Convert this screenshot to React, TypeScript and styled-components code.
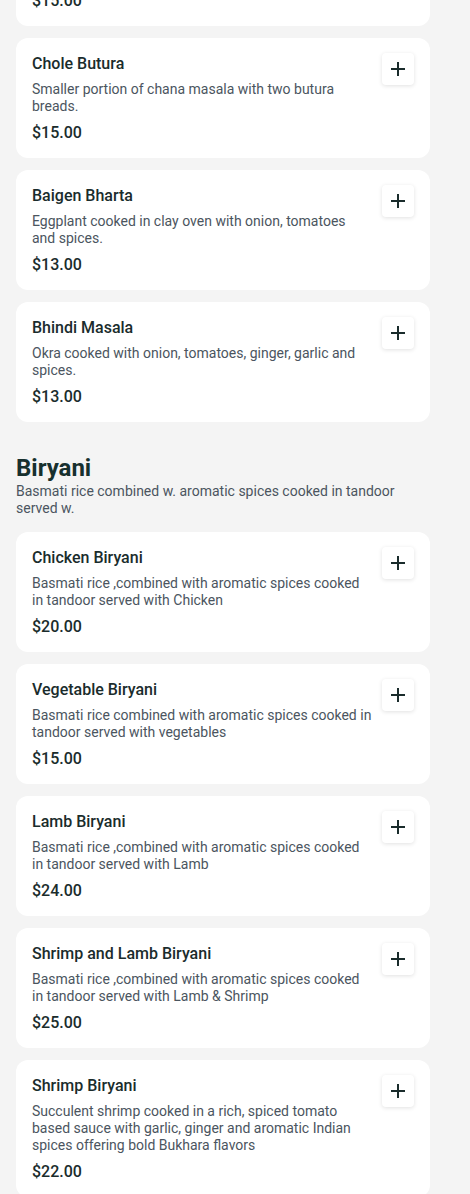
import React from "react";
import styled, { createGlobalStyle } from "styled-components";

const GlobalStyle = createGlobalStyle`
  html, body {
    margin: 0;
    padding: 0;
    background: #f4f4f4;
    font-family: Roboto, "Noto Sans", Arial, sans-serif;
    -webkit-font-smoothing: antialiased;
  }

  * {
    box-sizing: border-box;
  }
`;

const Page = styled.div`
  width: 430px;
  padding: 0 0 0 16px;
  margin-top: -94px;
`;

const Section = styled.section`
  display: flex;
  flex-direction: column;
  gap: 12px;

  & + & {
    margin-top: 32px;
  }
`;

const SectionHeader = styled.header`
  margin-bottom: 3px;
`;

const SectionTitle = styled.h2`
  margin: 0;
  font-size: 24px;
  line-height: 29px;
  font-weight: 700;
  color: #17302e;
`;

const SectionText = styled.p`
  margin: 0;
  font-size: 14px;
  line-height: 17px;
  color: #4b5560;
`;

const Card = styled.div`
  display: flex;
  align-items: flex-start;
  gap: 10px;
  background: #ffffff;
  border-radius: 12px;
  padding: 16px 16px 15px;
`;

const Info = styled.div`
  flex: 1;
  min-width: 0;
`;

const Name = styled.h3`
  margin: 0 0 7px;
  font-size: 16px;
  line-height: 20px;
  font-weight: 500;
  color: #1a2c2c;
`;

const Description = styled.p`
  margin: 0 0 8px;
  font-size: 14px;
  line-height: 17px;
  color: #4b5560;
`;

const Price = styled.div`
  font-size: 16px;
  line-height: 20px;
  font-weight: 500;
  color: #1a2c2c;
`;

const AddButton = styled.button`
  flex: none;
  width: 32px;
  height: 32px;
  margin-top: -1px;
  display: flex;
  align-items: center;
  justify-content: center;
  padding: 0;
  border: none;
  border-radius: 4px;
  background: #ffffff;
  box-shadow: 0 1px 4px rgba(0, 0, 0, 0.12);
  color: #1a2c2c;
  cursor: pointer;
`;

const PlusIcon = () => (
  <svg width="16" height="16" viewBox="0 0 16 16" fill="none">
    <path d="M8 1v14M1 8h14" stroke="currentColor" strokeWidth="2" />
  </svg>
);

interface Dish {
  name: string;
  description: string;
  price: string;
}

const SIDES: Dish[] = [
  {
    name: "Chana Masala",
    description: "Chickpeas cooked with onion, tomatoes, ginger, garlic and spices.",
    price: "$15.00",
  },
  { name: "Chole Butura", description: "Smaller portion of chana masala with two butura breads.", price: "$15.00" },
  { name: "Baigen Bharta", description: "Eggplant cooked in clay oven with onion, tomatoes and spices.", price: "$13.00" },
  { name: "Bhindi Masala", description: "Okra cooked with onion, tomatoes, ginger, garlic and spices.", price: "$13.00" },
];

const BIRYANI: Dish[] = [
  {
    name: "Chicken Biryani",
    description: "Basmati rice ,combined with aromatic spices cooked in tandoor served with Chicken",
    price: "$20.00",
  },
  {
    name: "Vegetable Biryani",
    description: "Basmati rice combined with aromatic spices cooked in tandoor served with vegetables",
    price: "$15.00",
  },
  {
    name: "Lamb Biryani",
    description: "Basmati rice ,combined with aromatic spices cooked in tandoor served with Lamb",
    price: "$24.00",
  },
  {
    name: "Shrimp and Lamb Biryani",
    description: "Basmati rice ,combined with aromatic spices cooked in tandoor served with Lamb & Shrimp",
    price: "$25.00",
  },
  {
    name: "Shrimp Biryani",
    description:
      "Succulent shrimp cooked in a rich, spiced tomato based sauce with garlic, ginger and aromatic Indian spices offering bold Bukhara flavors",
    price: "$22.00",
  },
];

const DishCard: React.FC<{ dish: Dish }> = ({ dish }) => (
  <Card>
    <Info>
      <Name>{dish.name}</Name>
      <Description>{dish.description}</Description>
      <Price>{dish.price}</Price>
    </Info>
    <AddButton aria-label={`Add ${dish.name}`}>
      <PlusIcon />
    </AddButton>
  </Card>
);

const App: React.FC = () => (
  <>
    <GlobalStyle />
    <Page>
      <Section>
        {SIDES.map((dish) => (
          <DishCard key={dish.name} dish={dish} />
        ))}
      </Section>

      <Section>
        <SectionHeader>
          <SectionTitle>Biryani</SectionTitle>
          <SectionText>Basmati rice combined w. aromatic spices cooked in tandoor served w.</SectionText>
        </SectionHeader>
        {BIRYANI.map((dish) => (
          <DishCard key={dish.name} dish={dish} />
        ))}
      </Section>
    </Page>
  </>
);

export default App;
